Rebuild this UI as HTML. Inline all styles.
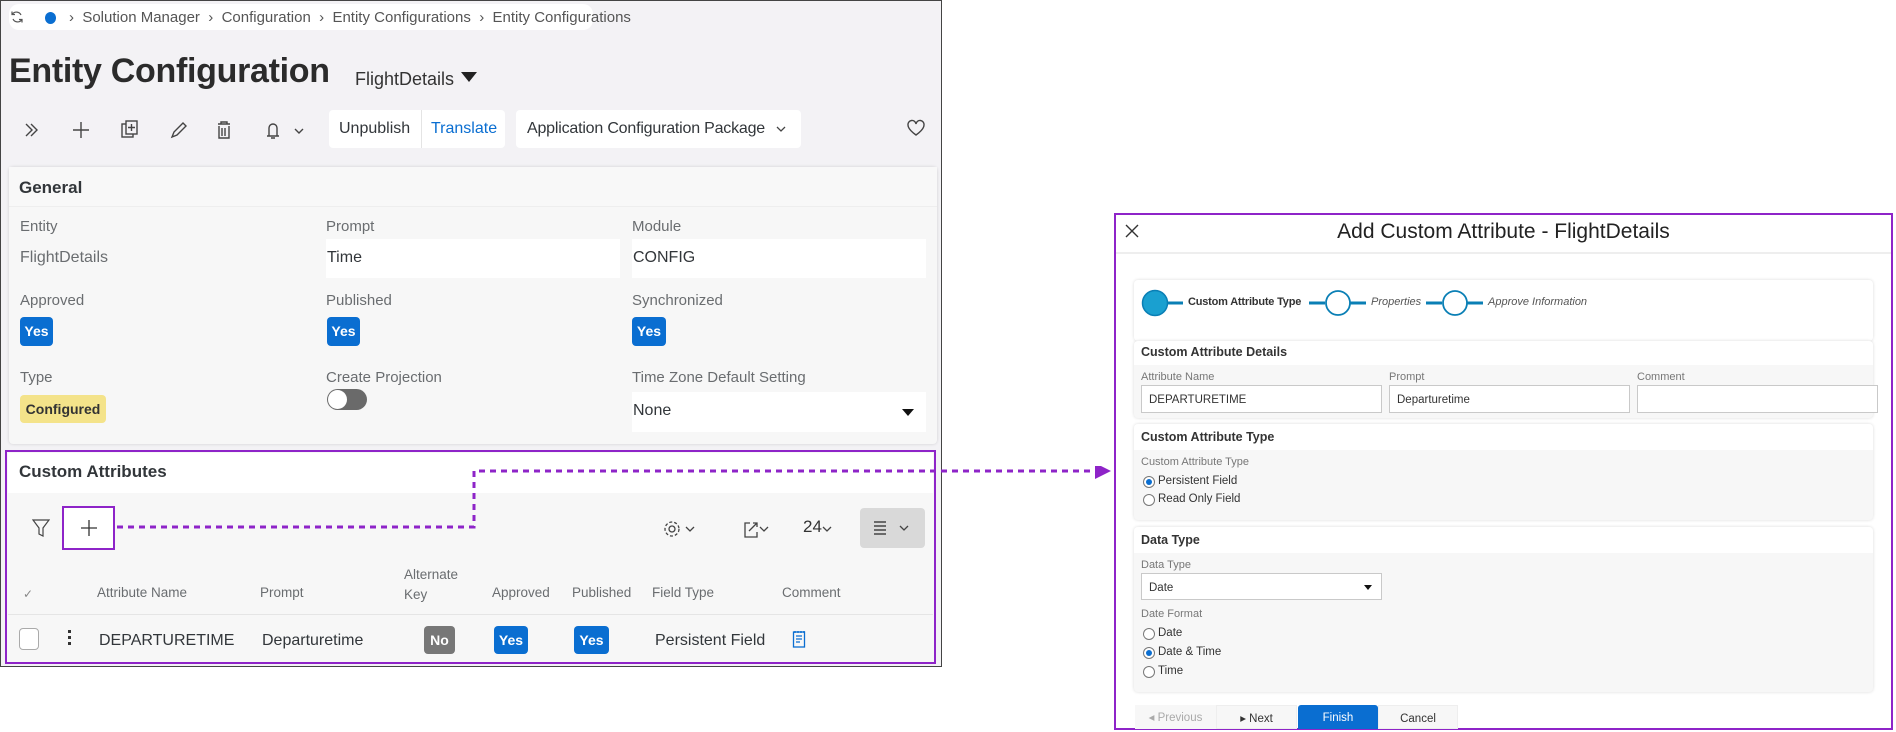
<!DOCTYPE html>
<html><head><meta charset="utf-8"><style>
*{box-sizing:border-box;margin:0;padding:0}
body{width:1896px;height:730px;background:#fff;font-family:"Liberation Sans",sans-serif;color:#333;position:relative;overflow:hidden}
.a{position:absolute}
.lbl{position:absolute;font-size:15px;color:#6a6d70}
.val{position:absolute;font-size:16px;color:#32363a}
.inp{position:absolute;background:#fff}
.yes{position:absolute;background:#0a6ed1;color:#fff;font-size:14px;font-weight:bold;border-radius:4px;text-align:center}
.card{position:absolute;background:#f7f7f7;border-radius:4px;box-shadow:0 0 3px rgba(0,0,0,.15)}
.dl{position:absolute;font-size:11px;color:#777}
.dh{position:absolute;font-size:12.5px;font-weight:bold;color:#333}
.di{position:absolute;background:#fff;border:1px solid #c9c9c9;font-size:11.5px;color:#333;padding:8px 0 0 7px}
.rad{position:absolute;width:12px;height:12px;border:1px solid #777;border-radius:50%;background:#fff}
.rad.on::after{content:"";position:absolute;left:2px;top:2px;width:6px;height:6px;border-radius:50%;background:#0a6ed1}
.rt{position:absolute;font-size:11.5px;color:#333}
.th{position:absolute;font-size:13.5px;color:#6a6d70}
</style></head><body>
<!-- left panel -->
<div class="a" style="left:0;top:0;width:942px;height:667px;background:#f3f2f5;border:1.5px solid #444"></div>
<div class="a" style="left:9px;top:4px;width:584px;height:26px;background:#fff;border-radius:10px"></div>
<svg class="a" style="left:10px;top:10px" width="14" height="14" viewBox="0 0 14 14"><path d="M11 5A5 5 0 0 0 2.5 4M3 9a5 5 0 0 0 8.5 1" fill="none" stroke="#555" stroke-width="1.2"/><path d="M2 1.5v3h3M12 12.5v-3H9" fill="none" stroke="#555" stroke-width="1.2"/></svg>
<div class="a" style="left:45px;top:12px;width:11px;height:12px;border-radius:50%;background:#0a6ed1"></div>
<div class="a" style="left:69px;top:9px;font-size:15px;color:#555;white-space:nowrap">›&nbsp; Solution Manager &nbsp;›&nbsp; Configuration &nbsp;›&nbsp; Entity Configurations &nbsp;›&nbsp; Entity Configurations</div>
<div class="a" style="left:9px;top:52px;font-size:34px;font-weight:bold;color:#2b2b2b;letter-spacing:-0.3px">Entity Configuration</div>
<div class="a" style="left:355px;top:69px;font-size:18px;color:#333">FlightDetails</div>
<div class="a" style="left:461px;top:72px;width:0;height:0;border-left:8px solid transparent;border-right:8px solid transparent;border-top:10px solid #222"></div>
<!-- toolbar icons -->
<svg class="a" style="left:20px;top:118px" width="300" height="24" viewBox="0 0 300 24" fill="none" stroke="#444" stroke-width="1.4">
<path d="M6 6l6 6-6 6M11 6l6 6-6 6"/>
<path d="M61 4v16M53 12h16"/>
<rect x="102" y="6" width="11" height="13"/><rect x="106" y="3" width="11" height="13" fill="#f3f2f5"/><path d="M111.5 6v7M108 9.5h7"/>
<path d="M152 19l2-5 9-9 3 3-9 9z"/>
<path d="M198 6h12M201 6V4h6v2M199 8v12h10V8M202 10v8M205 10v8"/>
<path d="M247 18h12M249 18V10a4 4 0 0 1 8 0v8M251 20h4"/>
<path d="M275 11l4 4 4-4"/>
</svg>
<div class="a" style="left:329px;top:110px;width:176px;height:38px;background:#fff;border-radius:4px"></div>
<div class="a" style="left:421px;top:110px;width:1px;height:38px;background:#e4e4e4"></div>
<div class="a" style="left:339px;top:120px;font-size:16px;color:#32363a">Unpublish</div>
<div class="a" style="left:431px;top:120px;font-size:16px;color:#0a6ed1">Translate</div>
<div class="a" style="left:516px;top:110px;width:285px;height:38px;background:#fff;border-radius:4px"></div>
<div class="a" style="left:527px;top:120px;font-size:16px;color:#32363a;letter-spacing:-0.2px">Application Configuration Package</div>
<svg class="a" style="left:775px;top:124px" width="12" height="10"><path d="M2 3l4 4 4-4" fill="none" stroke="#444" stroke-width="1.3"/></svg>
<svg class="a" style="left:906px;top:118px" width="20" height="20" viewBox="0 0 20 20"><path d="M10 17C3 12 2 9 2 7a4 4 0 0 1 8-1 4 4 0 0 1 8 1c0 2-1 5-8 10z" fill="none" stroke="#444" stroke-width="1.4"/></svg>
<!-- general card -->
<div class="card" style="left:9px;top:167px;width:928px;height:277px;background:#f7f7f7"></div>
<div class="a" style="left:9px;top:167px;width:928px;height:40px;background:#f8f8f8;border-bottom:1px solid #eee"></div>
<div class="a" style="left:19px;top:178px;font-size:17px;font-weight:bold;color:#32363a">General</div>
<div class="lbl" style="left:20px;top:218px">Entity</div>
<div class="lbl" style="left:326px;top:218px">Prompt</div>
<div class="lbl" style="left:632px;top:218px">Module</div>
<div class="inp" style="left:326px;top:239px;width:294px;height:39px"></div>
<div class="inp" style="left:632px;top:239px;width:294px;height:39px"></div>
<div class="val" style="left:20px;top:249px;color:#6a6d70">FlightDetails</div>
<div class="val" style="left:327px;top:249px">Time</div>
<div class="val" style="left:633px;top:249px">CONFIG</div>
<div class="lbl" style="left:20px;top:292px">Approved</div>
<div class="lbl" style="left:326px;top:292px">Published</div>
<div class="lbl" style="left:632px;top:292px">Synchronized</div>
<div class="yes" style="left:20px;top:317px;width:33px;height:29px;line-height:29px">Yes</div>
<div class="yes" style="left:327px;top:317px;width:33px;height:29px;line-height:29px">Yes</div>
<div class="yes" style="left:632px;top:317px;width:34px;height:29px;line-height:29px">Yes</div>
<div class="lbl" style="left:20px;top:369px">Type</div>
<div class="lbl" style="left:326px;top:369px">Create Projection</div>
<div class="lbl" style="left:632px;top:369px">Time Zone Default Setting</div>
<div class="a" style="left:20px;top:395px;width:86px;height:28px;background:#f4e38a;border-radius:4px;font-size:14px;font-weight:bold;color:#333;text-align:center;line-height:28px">Configured</div>
<div class="a" style="left:327px;top:389px;width:40px;height:21px;background:#6a6a6a;border-radius:11px"></div>
<div class="a" style="left:328px;top:390px;width:19px;height:19px;background:#fff;border-radius:50%"></div>
<div class="inp" style="left:632px;top:392px;width:294px;height:40px"></div>
<div class="val" style="left:633px;top:402px">None</div>
<div class="a" style="left:902px;top:409px;border-left:6px solid transparent;border-right:6px solid transparent;border-top:7px solid #111"></div>
<!-- custom attributes -->
<div class="a" style="left:5px;top:450px;width:931px;height:214px;background:#f7f7f7;border:2.5px solid #8e24c8"></div>
<div class="a" style="left:8px;top:453px;width:925px;height:40px;background:#fff"></div>
<div class="a" style="left:19px;top:462px;font-size:17px;font-weight:bold;color:#32363a">Custom Attributes</div>
<svg class="a" style="left:32px;top:518px" width="18" height="20"><path d="M1 2h16l-6 8v8l-4-2v-6z" fill="none" stroke="#444" stroke-width="1.2"/></svg>
<div class="a" style="left:62px;top:506px;width:53px;height:44px;background:#fff;border:2px solid #8e24c8"></div>
<svg class="a" style="left:79px;top:518px" width="20" height="20"><path d="M10 2v16M2 10h16" stroke="#333" stroke-width="1.3"/></svg>
<svg class="a" style="left:115px;top:466px" width="1000" height="70">
<path d="M2 61H359V5H990" fill="none" stroke="#8e24c8" stroke-width="3" stroke-dasharray="6 5"/>
<path d="M980 -3L996 5L980 13z" fill="#8e24c8"/>
</svg>
<svg class="a" style="left:662px;top:518px" width="270" height="22" fill="none" stroke="#444" stroke-width="1.3">
<circle cx="10" cy="11" r="3"/><circle cx="10" cy="11" r="7" stroke-dasharray="3 2"/>
<path d="M24 9l4 4 4-4"/>
<path d="M88 5h-5v14h12v-5M87 13l8-8M91 5h4v4"/>
<path d="M98 9l4 4 4-4"/>
<path d="M161 9l4 4 4-4"/>
</svg>
<div class="a" style="left:803px;top:517px;font-size:17px;color:#333">24</div>
<div class="a" style="left:860px;top:508px;width:65px;height:40px;background:#d9d9d9;border-radius:4px"></div>
<svg class="a" style="left:872px;top:519px" width="44" height="18" fill="none" stroke="#444" stroke-width="1.6"><path d="M2 3h12M2 7h12M2 11h12M2 15h12"/><path d="M28 7l4 4 4-4" stroke-width="1.3"/></svg>
<div class="a" style="left:23px;top:587px;font-size:12px;color:#888">✓</div>
<div class="th" style="left:97px;top:585px">Attribute Name</div>
<div class="th" style="left:260px;top:585px">Prompt</div>
<div class="th" style="left:404px;top:565px;line-height:20px">Alternate<br>Key</div>
<div class="th" style="left:492px;top:585px">Approved</div>
<div class="th" style="left:572px;top:585px">Published</div>
<div class="th" style="left:652px;top:585px">Field Type</div>
<div class="th" style="left:782px;top:585px">Comment</div>
<div class="a" style="left:8px;top:614px;width:925px;height:1px;background:#e5e5e5"></div>
<div class="a" style="left:19px;top:628px;width:20px;height:22px;border:1px solid #aaa;border-radius:4px;background:#fff"></div>
<div class="a" style="left:68px;top:630px;width:3px;height:3px;background:#333;box-shadow:0 6px #333,0 12px #333"></div>
<div class="val" style="left:99px;top:632px">DEPARTURETIME</div>
<div class="val" style="left:262px;top:632px">Departuretime</div>
<div class="a" style="left:424px;top:626px;width:31px;height:28px;background:#777;border-radius:4px;color:#fff;font-size:14px;font-weight:bold;text-align:center;line-height:28px">No</div>
<div class="yes" style="left:494px;top:626px;width:34px;height:28px;line-height:28px">Yes</div>
<div class="yes" style="left:574px;top:626px;width:35px;height:28px;line-height:28px">Yes</div>
<div class="val" style="left:655px;top:632px">Persistent Field</div>
<svg class="a" style="left:792px;top:630px" width="14" height="18" fill="none" stroke="#0a6ed1" stroke-width="1.3"><rect x="1.5" y="2" width="11" height="15"/><path d="M4 6h6M4 9h6M4 12h4M3 1v2M6 1v2M9 1v2M12 1v2"/></svg>
<!-- dialog -->
<div class="a" style="left:1114px;top:213px;width:779px;height:517px;background:#fff;border:2px solid #8e24c8"></div>
<div class="a" style="left:1116px;top:252px;width:775px;height:2px;background:#eee"></div>
<svg class="a" style="left:1124px;top:223px" width="16" height="16"><path d="M2 2l12 12M14 2L2 14" stroke="#333" stroke-width="1.4"/></svg>
<div class="a" style="left:1116px;top:220px;width:775px;text-align:center;font-size:21px;color:#222">Add Custom Attribute - FlightDetails</div>
<div class="card" style="left:1134px;top:280px;width:739px;height:61px;background:#fff"></div>
<svg class="a" style="left:1140px;top:288px" width="200" height="30"><circle cx="15" cy="15" r="12.5" fill="#1aa0d0" stroke="#0a7fb5" stroke-width="1.5"/><path d="M27 15h16" stroke="#0a7fb5" stroke-width="3"/></svg>
<div class="a" style="left:1188px;top:296px;font-size:11px;font-weight:bold;color:#333;letter-spacing:-0.2px">Custom Attribute Type</div>
<svg class="a" style="left:1308px;top:288px" width="60" height="30"><path d="M1 15h16M42 15h16" stroke="#0a7fb5" stroke-width="3"/><circle cx="30" cy="15" r="12" fill="#fff" stroke="#0a7fb5" stroke-width="1.8"/></svg>
<div class="a" style="left:1371px;top:296px;font-size:11px;font-style:italic;color:#555">Properties</div>
<svg class="a" style="left:1425px;top:288px" width="60" height="30"><path d="M1 15h16M42 15h16" stroke="#0a7fb5" stroke-width="3"/><circle cx="30" cy="15" r="12" fill="#fff" stroke="#0a7fb5" stroke-width="1.8"/></svg>
<div class="a" style="left:1488px;top:296px;font-size:11px;font-style:italic;color:#555">Approve Information</div>
<!-- details -->
<div class="card" style="left:1134px;top:341px;width:739px;height:77px"></div>
<div class="a" style="left:1134px;top:341px;width:739px;height:24px;background:#fff;border-radius:4px 4px 0 0"></div>
<div class="dh" style="left:1141px;top:345px">Custom Attribute Details</div>
<div class="dl" style="left:1141px;top:371px">Attribute Name</div>
<div class="dl" style="left:1389px;top:371px">Prompt</div>
<div class="dl" style="left:1637px;top:371px">Comment</div>
<div class="di" style="left:1141px;top:385px;width:241px;height:28px">DEPARTURETIME</div>
<div class="di" style="left:1389px;top:385px;width:241px;height:28px">Departuretime</div>
<div class="di" style="left:1637px;top:385px;width:241px;height:28px"></div>
<!-- type -->
<div class="card" style="left:1134px;top:424px;width:739px;height:96px"></div>
<div class="a" style="left:1134px;top:424px;width:739px;height:26px;background:#fff;border-radius:4px 4px 0 0"></div>
<div class="dh" style="left:1141px;top:430px">Custom Attribute Type</div>
<div class="dl" style="left:1141px;top:456px">Custom Attribute Type</div>
<div class="rad on" style="left:1143px;top:476px"></div><div class="rt" style="left:1158px;top:475px">Persistent Field</div>
<div class="rad" style="left:1143px;top:494px"></div><div class="rt" style="left:1158px;top:493px">Read Only Field</div>
<!-- data type -->
<div class="card" style="left:1134px;top:527px;width:739px;height:165px"></div>
<div class="a" style="left:1134px;top:527px;width:739px;height:26px;background:#fff;border-radius:4px 4px 0 0"></div>
<div class="dh" style="left:1141px;top:533px">Data Type</div>
<div class="dl" style="left:1141px;top:559px">Data Type</div>
<div class="di" style="left:1141px;top:573px;width:241px;height:27px">Date</div>
<div class="a" style="left:1364px;top:585px;border-left:4px solid transparent;border-right:4px solid transparent;border-top:5px solid #111"></div>
<div class="dl" style="left:1141px;top:608px">Date Format</div>
<div class="rad" style="left:1143px;top:628px"></div><div class="rt" style="left:1158px;top:627px">Date</div>
<div class="rad on" style="left:1143px;top:647px"></div><div class="rt" style="left:1158px;top:646px">Date &amp; Time</div>
<div class="rad" style="left:1143px;top:666px"></div><div class="rt" style="left:1158px;top:665px">Time</div>
<!-- buttons -->
<div class="a" style="left:1135px;top:705px;width:81px;height:24px;background:#f7f7f7;font-size:11.5px;color:#aaa;text-align:center;line-height:26px">◂ Previous</div>
<div class="a" style="left:1216px;top:705px;width:81px;height:24px;background:#f7f7f7;font-size:11.5px;color:#333;text-align:center;line-height:26px;border:1px solid #eee">▸ Next</div>
<div class="a" style="left:1298px;top:705px;width:80px;height:24px;background:#0a6ed1;font-size:11.5px;color:#fff;text-align:center;line-height:26px;border-radius:3px 3px 0 0">Finish</div>
<div class="a" style="left:1378px;top:705px;width:80px;height:24px;background:#f7f7f7;font-size:11.5px;color:#333;text-align:center;line-height:26px;border:1px solid #eee">Cancel</div>
</body></html>
